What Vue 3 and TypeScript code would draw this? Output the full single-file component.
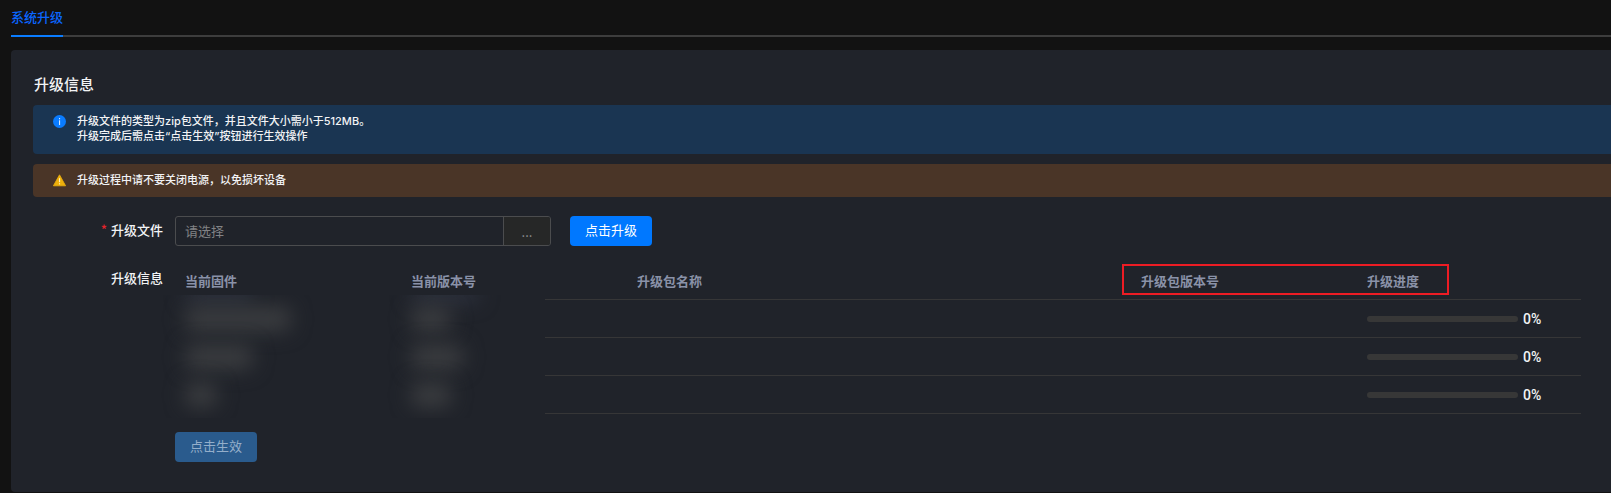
<script setup lang="ts">
interface FirmwareRow {
  id: number
  name: string
  version: string
  progress: number
}

const rows: FirmwareRow[] = [
  { id: 1, name: 'w-long', version: 'w-short', progress: 0 },
  { id: 2, name: 'w-mid', version: 'w-wide', progress: 0 },
  { id: 3, name: 'w-tiny', version: 'w-short', progress: 0 },
]
</script>

<template>
  <div class="page">
    <nav class="tabs">
      <a class="tab" href="#upgrade" aria-current="page">系统升级</a>
    </nav>

    <main class="card">
      <h1 class="title">升级信息</h1>

      <div class="alert info">
        <svg class="icon" viewBox="0 0 13 13" aria-hidden="true">
          <circle cx="6.5" cy="6.5" r="6.5" fill="#0a7cff" />
          <rect x="6" y="3" width="1.1" height="1.3" fill="#d5e8ff" />
          <rect x="6" y="5.3" width="1.1" height="4.7" fill="#d5e8ff" />
        </svg>
        <p>升级文件的类型为zip包文件，并且文件大小需小于512MB。<br />升级完成后需点击“点击生效”按钮进行生效操作</p>
      </div>

      <div class="alert warning">
        <svg class="icon" viewBox="0 0 13 13" aria-hidden="true">
          <path d="M6.5 .8 12.6 11.8H.4Z" fill="#eeb00c" stroke="#eeb00c" stroke-width=".8" stroke-linejoin="round" />
          <rect x="6" y="4.2" width="1.1" height="4" fill="#fff0c0" />
          <rect x="6" y="9.2" width="1.1" height="1.2" fill="#fff0c0" />
        </svg>
        <p>升级过程中请不要关闭电源，以免损坏设备</p>
      </div>

      <form class="form" @submit.prevent>
        <div class="form-row">
          <label class="label required" for="upgrade-file">升级文件</label>
          <div class="picker">
            <input id="upgrade-file" type="text" placeholder="请选择" readonly />
            <button type="button" class="browse">...</button>
          </div>
          <button type="submit" class="btn">点击升级</button>
        </div>

        <div class="form-row info-row">
          <span id="info-label" class="label">升级信息</span>
          <div class="table-wrap">
            <table aria-labelledby="info-label">
              <colgroup>
                <col class="col" />
                <col class="col" />
                <col />
                <col class="col" />
                <col class="col-last" />
              </colgroup>
              <thead>
                <tr>
                  <th scope="col">当前固件</th>
                  <th scope="col">当前版本号</th>
                  <th scope="col">升级包名称</th>
                  <th scope="col">升级包版本号</th>
                  <th scope="col">升级进度</th>
                </tr>
              </thead>
              <tbody>
                <tr v-for="row in rows" :key="row.id">
                  <td></td>
                  <td></td>
                  <td></td>
                  <td></td>
                  <td>
                    <div class="progress">
                      <div class="track">
                        <div class="bar" :style="{ width: row.progress + '%' }"></div>
                      </div>
                      <span class="percent">{{ row.progress }}%</span>
                    </div>
                  </td>
                </tr>
              </tbody>
            </table>
            <div class="redacted" aria-hidden="true">
              <div class="column">
                <i class="tint w-mid"></i>
                <i v-for="row in rows" :key="row.id" :class="row.name"></i>
              </div>
              <div class="column">
                <i class="tint w-mid"></i>
                <i v-for="row in rows" :key="row.id" :class="row.version"></i>
              </div>
            </div>
            <div class="highlight" aria-hidden="true"></div>
          </div>
        </div>

        <div class="actions">
          <button type="button" class="btn" disabled>点击生效</button>
        </div>
      </form>
    </main>
  </div>
</template>

<style>
body {
  background: #121212;
}
</style>

<style scoped>
.page {
  padding-left: 11px;
  color: #f2f3f5;
  font-family: "Noto Sans CJK SC", "Noto Sans", sans-serif;
  font-size: 13px;
  font-weight: 500;
  line-height: 20px;
}

.page * {
  box-sizing: border-box;
}

.tabs {
  display: flex;
  height: 37px;
  margin-bottom: 13px;
  box-shadow: inset 0 -2px #3d3d3d;
}

.tab {
  padding-top: 7px;
  border-bottom: 2px solid #0a7cff;
  color: #0a66ff;
  text-decoration: none;
}

.card {
  padding: 24px 0 30px 22px;
  border-radius: 4px 0 0 4px;
  background: #20232a;
}

.title {
  margin: 0 0 11px;
  padding-left: 1px;
  font-size: 15px;
  font-weight: 500;
  line-height: 20px;
}

.alert {
  display: flex;
  gap: 11px;
  margin-bottom: 10px;
  padding: 9px 20px;
  border-radius: 4px 0 0 4px;
  font-family: Inter, "Noto Sans CJK SC", sans-serif;
  font-size: 11px;
  line-height: 15px;
}

.info {
  padding-bottom: 10px;
}

.alert p {
  margin: 0;
}

.icon {
  flex: none;
  width: 13px;
  height: 13px;
  margin-top: 1px;
}

.info {
  background: #1a3552;
}

.warning {
  margin-bottom: 19px;
  background: #4a3527;
}

.form-row {
  display: flex;
  align-items: center;
}

.label {
  flex: none;
  width: 142px;
  padding: 0 12px 2px 0;
  text-align: right;
}

.required::before {
  content: "*";
  margin-right: 4px;
  color: #e5232b;
}

.picker {
  display: flex;
  width: 376px;
  height: 30px;
  margin-right: 19px;
  border: 1px solid #4b4c4e;
  border-radius: 3px;
  overflow: hidden;
}

.picker input {
  flex: 1;
  min-width: 0;
  padding: 0 9px 2px;
  border: 0;
  outline: 0;
  background: transparent;
  color: #f2f3f5;
  font: 400 13px "Noto Sans CJK SC", sans-serif;
}

.picker input::placeholder {
  color: #818285;
  opacity: 1;
}

.browse {
  width: 47px;
  padding: 0;
  border: 0;
  border-left: 1px solid #4b4c4e;
  background: #262727;
  color: #909193;
  font: 400 13px "Noto Sans CJK SC", sans-serif;
}

.btn {
  width: 82px;
  height: 30px;
  padding: 0 0 4px;
  border: 0;
  border-radius: 4px;
  background: #0078ff;
  color: #fff;
  font: 400 13px "Noto Sans CJK SC", sans-serif;
}

.btn:disabled {
  background: #2a5b8d;
  color: #94aeca;
}

.info-row {
  align-items: flex-start;
  margin-top: 16px;
}

.info-row .label {
  padding-top: 6px;
}

.table-wrap {
  position: relative;
  flex: 1;
  margin-right: 30px;
}

table {
  width: 100%;
  table-layout: fixed;
  border-collapse: separate;
  border-spacing: 0;
}

.col {
  width: 226px;
}

.col-last {
  width: 224px;
}

th,
td {
  height: 38px;
  padding: 0 10px;
  border-bottom: 1px solid #363637;
  text-align: left;
}

th {
  color: #8a92a8;
  font-weight: 700;
}

.progress {
  display: flex;
  align-items: center;
  gap: 5px;
}

.track {
  width: 151px;
  height: 6px;
  border-radius: 3px;
  background: #373737;
  overflow: hidden;
}

.bar {
  height: 100%;
  background: #0078ff;
}

.percent {
  font-family: Roboto, sans-serif;
  font-size: 14px;
}

/* Mosaic over the firmware names and versions */
.redacted {
  position: absolute;
  top: 33px;
  bottom: -4px;
  left: -15px;
  display: flex;
  width: 385px;
  padding-left: 25px;
  background: #20232a;
  overflow: hidden;
}

.column {
  flex: none;
  width: 226px;
}

.column i {
  display: block;
  height: 24px;
  margin-bottom: 14px;
  border-radius: 8px;
  background: #3b3d40;
  filter: blur(10px);
}

.column .tint {
  height: 12px;
  margin: -6px 0 6px;
  background: #323745;
}

.w-long {
  width: 106px;
}

.w-mid {
  width: 68px;
}

.w-wide {
  width: 52px;
}

.w-short {
  width: 40px;
}

.w-tiny {
  width: 32px;
}

.highlight {
  position: absolute;
  top: 2px;
  right: 132px;
  width: 327px;
  height: 31px;
  border: 2px solid #ed1c24;
  pointer-events: none;
}

.actions {
  margin: 18px 0 0 142px;
}
</style>
